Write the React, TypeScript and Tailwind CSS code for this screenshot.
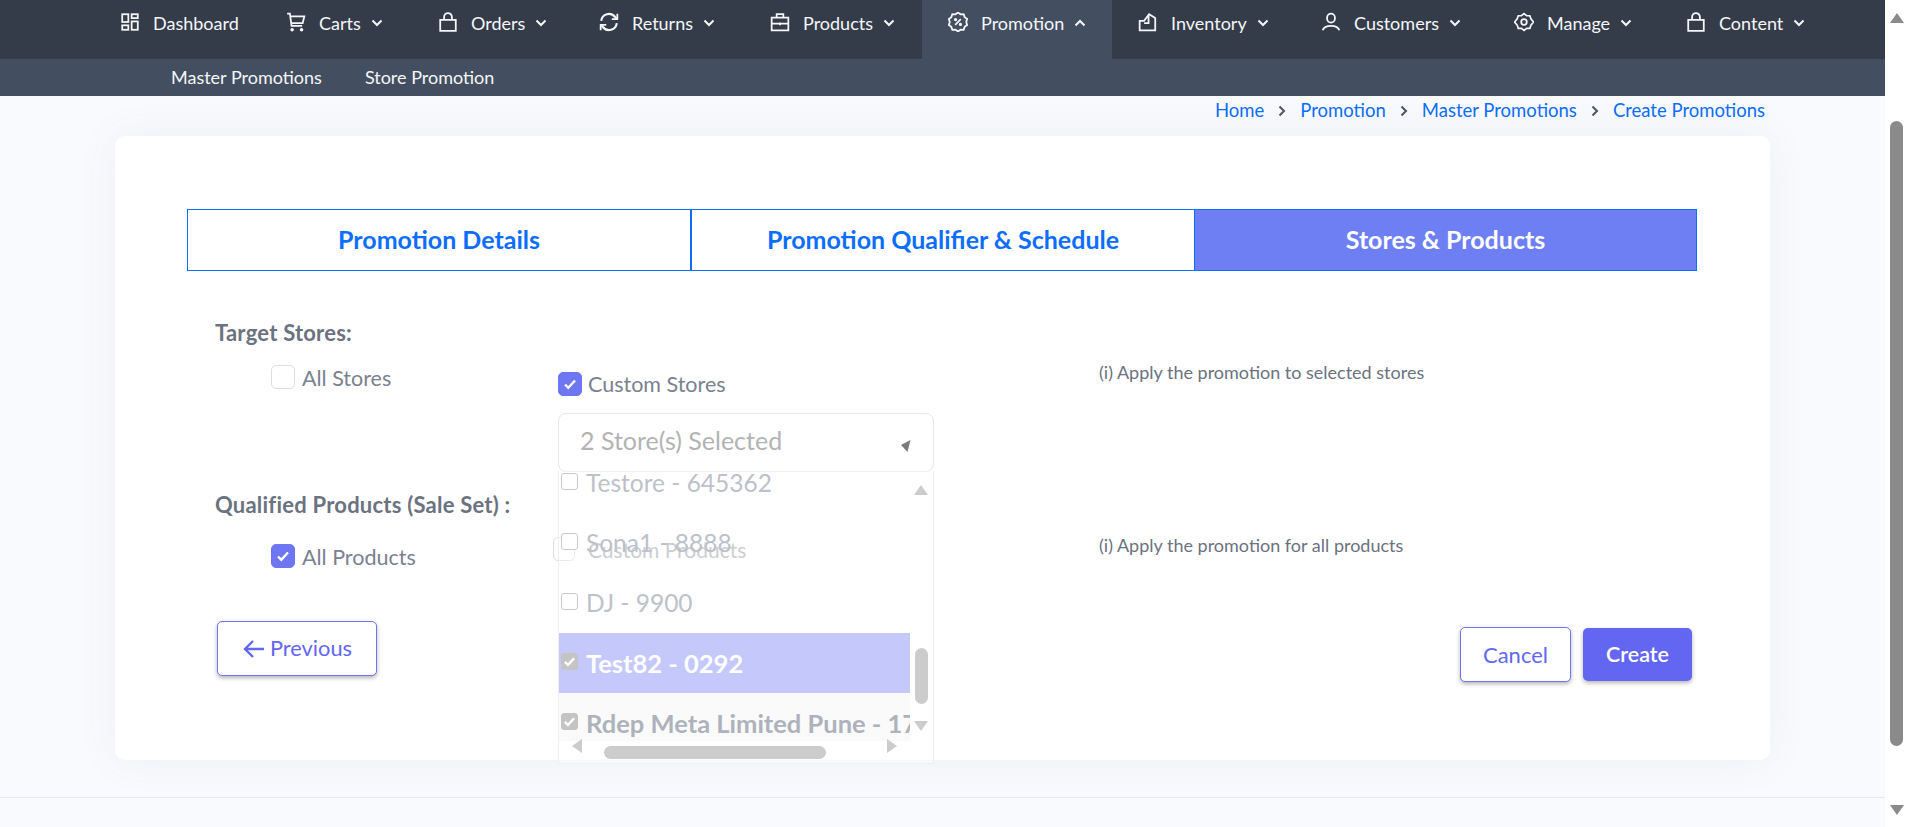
import React from "react";

const Svg = ({ children }: { children: React.ReactNode }) => (
  <svg
    xmlns="http://www.w3.org/2000/svg"
    width="20"
    height="20"
    viewBox="0 0 18 18"
    fill="none"
    stroke="currentColor"
    strokeWidth="1.6"
    className="shrink-0"
  >
    {children}
  </svg>
);

const icons: Record<string, React.ReactNode> = {
  dashboard: (
    <Svg>
      <rect x="2" y="2" width="5.5" height="7" />
      <rect x="10.5" y="2" width="5.5" height="3.5" />
      <rect x="2" y="12" width="5.5" height="4" />
      <rect x="10.5" y="8.5" width="5.5" height="7.5" />
    </Svg>
  ),
  cart: (
    <Svg>
      <path d="M1 1.5h2.5l1.5 11h9.5M4 4h12.5l-1.5 6H5" />
      <circle cx="5.5" cy="16" r="0.8" fill="currentColor" />
      <circle cx="14" cy="16" r="0.8" fill="currentColor" />
    </Svg>
  ),
  bag: (
    <Svg>
      <path d="M2 7h14v10H2zM5.5 7V4.500a3.500 3.500 0 0 1 7 0V7" />
    </Svg>
  ),
  returns: (
    <Svg>
      <path d="M2 8a7 7 0 0 1 12.500-3.500L16 6M16 10a7 7 0 0 1-12.500 3.500L2 12" strokeWidth="1.900" />
      <path d="M16.500 1.500V6.500H11.500M1.500 16.500V11.500H6.500" strokeWidth="1.600" />
    </Svg>
  ),
  products: (
    <Svg>
      <path d="M1.500 5h15v11.500h-15zM6 5V2h6v3M1.500 10.500h15M9 9.500v2.500" />
    </Svg>
  ),
  promotion: (
    <Svg>
      <path d="M9 1l2.300 1.600 2.800-.1.9 2.600 2.200 1.700L16.400 9.500l.8 2.700-2.200 1.700-.9 2.600-2.800-.1L9 18l-2.300-1.600-2.800.1-.9-2.600L.8 12.200l.8-2.700-.8-2.700L3 5.100l.9-2.600 2.800.1z" transform="translate(0 -.5)" />
      <path d="M6.500 11.500l5-5" />
      <circle cx="6.800" cy="6.800" r="0.7" />
      <circle cx="11.200" cy="11.200" r="0.7" />
    </Svg>
  ),
  inventory: (
    <Svg>
      <path d="M1.500 8H5.500L10 2l5.500 3.500V16.500H1.500zM9.500 3v7H5.500" />
    </Svg>
  ),
  customers: (
    <Svg>
      <rect x="5.500" y="1.500" width="7" height="8" rx="3.500" />
      <path d="M1.500 16.500c1-3 3.500-4 7.500-4s6.500 1 7.500 4" />
    </Svg>
  ),
  manage: (
    <Svg>
      <path d="M9 1l2.500 2h3l1 3L18 9l-2.500 3-1 3h-3L9 17l-2.500-2h-3l-1-3L0 9l2.500-3 1-3h3z" transform="translate(.5 .5) scale(.95)" />
      <circle cx="9" cy="9" r="2.500" />
    </Svg>
  ),
};

const Chevron = ({ up }: { up?: boolean }) => (
  <svg width="12" height="8" viewBox="0 0 12 8" fill="none" stroke="currentColor" strokeWidth="2" className="shrink-0">
    <path d={up ? "M1.500 6.500L6 2l4.500 4.500" : "M1.500 1.500L6 6l4.500-4.500"} />
  </svg>
);

const Crumb = () => (
  <svg width="8" height="12" viewBox="0 0 8 12" fill="none" stroke="#4b5563" strokeWidth="2" className="mt-[7px] shrink-0">
    <path d="M1.500 1.500L6 6l-4.500 4.500" />
  </svg>
);

const navItems = [
  { label: "Dashboard", icon: "dashboard", width: "w-[166px]", caret: false },
  { label: "Carts", icon: "cart", width: "w-[152px]", caret: true },
  { label: "Orders", icon: "bag", width: "w-[161px]", caret: true },
  { label: "Returns", icon: "returns", width: "w-[171px]", caret: true },
  { label: "Products", icon: "products", width: "w-[178px]", caret: true },
  { label: "Promotion", icon: "promotion", width: "w-[190px]", caret: true, active: true },
  { label: "Inventory", icon: "inventory", width: "w-[183px]", caret: true },
  { label: "Customers", icon: "customers", width: "w-[193px]", caret: true },
  { label: "Manage", icon: "manage", width: "w-[172px]", caret: true },
  { label: "Content", icon: "bag", width: "w-[190px]", caret: true },
];

const Check = ({ on, className }: { on?: boolean; className: string }) => (
  <span
    className={`flex shrink-0 items-center justify-center rounded-[5px] border ${
      on ? "border-[#6e76f2] bg-[#6e76f2]" : "border-[#dcdee3] bg-white"
    } ${className}`}
  >
    {on && (
      <svg width="14" height="12" viewBox="0 0 14 12" fill="none" stroke="#fff" strokeWidth="2.400">
        <path d="M2 6.500l3.300 3.300L12 2.500" />
      </svg>
    )}
  </span>
);

const Option = ({ text, state }: { text: string; state?: "active" | "picked" }) => (
  <div
    className={`flex h-[60px] shrink-0 items-start whitespace-nowrap pl-[2px] pt-[14px] leading-[32px] ${
      state === "active"
        ? "bg-[#c5c8fa] text-[25.500px] font-bold text-white"
        : state === "picked"
          ? "bg-[#fafafa] text-[25.500px] font-bold text-[#adb2bb]"
          : "text-[24.500px] text-[#bcc1ca]"
    }`}
  >
    <span
      className={`mr-[8px] mt-[6px] flex h-[17px] w-[17px] shrink-0 items-center justify-center rounded-[3px] border ${
        state ? "border-[#c4c4c4] bg-[#c4c4c4]" : "border-[#c9c9c9] bg-white"
      }`}
    >
      {state && (
        <svg width="13" height="11" viewBox="0 0 14 12" fill="none" stroke="#fff" strokeWidth="2.600">
          <path d="M2 6.500l3.300 3.300L12 2.500" />
        </svg>
      )}
    </span>
    {text}
  </div>
);

export default function App() {
  return (
    <div className="flex h-[827px] w-full overflow-hidden bg-[#f9fafd] font-[family-name:Lato,sans-serif] text-[18px]">
      <div className="flex min-w-0 flex-1 flex-col">
        {/* top nav */}
        <nav className="flex h-[59px] bg-[#343c4a] pl-[94px] text-[#f5f6f8]">
          {navItems.map((item) => (
            <div
              key={item.label}
              className={`flex items-start gap-[13px] pl-[26px] pt-[12px] ${item.width} ${
                item.active ? "bg-[#434f60]" : ""
              }`}
            >
              {icons[item.icon]}
              <span className="flex h-[24px] items-center gap-[10px] leading-[24px] -mt-[1px]">
                {item.label}
                {item.caret && <Chevron up={item.active} />}
              </span>
            </div>
          ))}
        </nav>
        <div className="flex h-[37px] items-center gap-[43px] bg-[#434f60] pl-[171px] text-[#f5f6f8]">
          <span>Master Promotions</span>
          <span>Store Promotion</span>
        </div>

        {/* breadcrumb */}
        <div className="flex h-[40px] items-start justify-end gap-[14px] pr-[120px] pt-[2px] text-[18.500px] leading-[24px] text-[#0d6efd]">
          <span>Home</span>
          <Crumb />
          <span>Promotion</span>
          <Crumb />
          <span>Master Promotions</span>
          <Crumb />
          <span>Create Promotions</span>
        </div>

        {/* card */}
        <div className="ml-[115px] h-[624px] w-[1655px] shrink-0 rounded-[10px] bg-white px-[72px] pt-[73px] shadow-[0_0_40px_rgba(90,100,140,0.07)]">
          <div className="flex h-[62px] w-[1510px] text-[25px] font-bold">
            <div className="flex w-[504px] items-center justify-center border border-[#0d6efd] text-[#0d6efd]">
              Promotion Details
            </div>
            <div className="flex w-[504px] items-center justify-center border border-[#0d6efd] text-[#0d6efd]">
              Promotion Qualifier &amp; Schedule
            </div>
            <div className="flex w-[502px] items-center justify-center border border-l-0 border-[#0d6efd] bg-[#6e7ff3] text-white">
              Stores &amp; Products
            </div>
          </div>

          <div className="ml-[28px] mt-[50px] h-[24px] text-[22px] font-bold leading-[24px] tracking-[0.01em] text-[#6b7280]">
            Target Stores:
          </div>

          {/* target stores row */}
          <div className="mt-[20px] flex h-[107px] pl-[84px] text-[#7a8190]">
            <div className="flex w-[287px] items-start gap-[7px]">
              <Check className="h-[24px] w-[24px]" />
              <span className="text-[21.500px] leading-[26px]">All Stores</span>
            </div>
            <div className="relative mt-[6px] w-[541px]">
              <div className="flex items-center gap-[6px]">
                <Check on className="h-[24px] w-[24px]" />
                <span className="text-[21.500px] leading-[26px]">Custom Stores</span>
              </div>
              <div className="mt-[16px] flex h-[59px] w-[376px] items-start justify-between rounded-[8px] border border-[#e5e7eb] bg-white pl-[21px] pr-[22px] pt-[10px] text-[25px] leading-[32px] text-[#b3b3b3]">
                2 Store(s) Selected
                <svg width="10" height="12" viewBox="0 0 10 12" className="mt-[16px]">
                  <path d="M9.500 0L0 5l6.500 7z" fill="#7a7a7a" />
                </svg>
              </div>
              {/* open dropdown list */}
              <div className="absolute left-0 top-[100px] z-10 h-[293px] w-[376px] overflow-hidden border-x border-b border-[#eeeff2] bg-white/40">
                <div className="-mt-[18px] flex h-[288px] w-[351px] flex-col overflow-hidden">
                  <Option text="Testore - 645362" />
                  <Option text="Sona1 - 8888" />
                  <Option text="DJ - 9900" />
                  <Option text="Test82 - 0292" state="active" />
                  <Option text="Rdep Meta Limited Pune - 1701" state="picked" />
                </div>
                {/* list scrollbars */}
                <svg width="14" height="10" viewBox="0 0 14 10" className="absolute left-[355px] top-[14px]">
                  <path d="M7 0l7 10H0z" fill="#ccc" />
                </svg>
                <div className="absolute left-[356px] top-[177px] h-[56px] w-[13px] rounded-full bg-[#cccccc]" />
                <svg width="14" height="10" viewBox="0 0 14 10" className="absolute left-[355px] top-[250px]">
                  <path d="M0 0h14L7 10z" fill="#ccc" />
                </svg>
                <svg width="10" height="14" viewBox="0 0 10 14" className="absolute left-[13px] top-[268px]">
                  <path d="M10 0v14L0 7z" fill="#ccc" />
                </svg>
                <div className="absolute left-[45px] top-[275px] h-[13px] w-[222px] rounded-full bg-[#cccccc]" />
                <svg width="10" height="14" viewBox="0 0 10 14" className="absolute left-[328px] top-[268px]">
                  <path d="M0 0v14l10-7z" fill="#ccc" />
                </svg>
              </div>
            </div>
            <span className="-mt-[4px] text-[18px] leading-[22px] text-[#6b7280]">(i) Apply the promotion to selected stores</span>
          </div>

          <div className="ml-[28px] mt-[21px] h-[24px] text-[22px] font-bold leading-[24px] tracking-[0.01em] text-[#6b7280]">
            Qualified Products (Sale Set) :
          </div>

          {/* qualified products row */}
          <div className="mt-[15px] flex h-[38px] pl-[84px] text-[#7a8190]">
            <div className="mt-[12px] flex w-[282px] items-start gap-[7px]">
              <Check on className="h-[24px] w-[24px]" />
              <span className="text-[21.500px] leading-[26px]">All Products</span>
            </div>
            <div className="mt-[5px] flex w-[546px] items-start gap-[13px] text-[#a9adb5]">
              <Check className="h-[24px] w-[22px]" />
              <span className="text-[21px] leading-[26px]">Custom Products</span>
            </div>
            <span className="mt-[2px] text-[18px] leading-[22px] text-[#6b7280]">(i) Apply the promotion for all products</span>
          </div>

          {/* actions */}
          <div className="ml-[30px] mt-[51px] flex w-[1475px] items-start">
            <button className="flex h-[55px] w-[160px] items-center justify-center gap-[4px] rounded-[5px] border border-[#6e76f2] bg-white text-[21.800px] text-[#6366f1] shadow-[0_2px_4px_rgba(0,0,0,0.3)]">
              <svg width="24" height="22" viewBox="0 0 24 22" fill="none" stroke="currentColor" strokeWidth="2.400">
                <path d="M22 11H3M11 3l-8 8 8 8" />
              </svg>
              Previous
            </button>
            <div className="ml-auto mt-[6px] flex items-start gap-[12px]">
              <button className="h-[55px] w-[111px] rounded-[5px] border border-[#6e76f2] bg-white text-[22px] text-[#6366f1] shadow-[0_2px_4px_rgba(0,0,0,0.3)]">
                Cancel
              </button>
              <button className="mt-[1px] h-[53px] w-[109px] rounded-[5px] bg-[#6366f1] text-[21.500px] font-semibold text-white shadow-[0_2px_4px_rgba(0,0,0,0.3)]">
                Create
              </button>
            </div>
          </div>
        </div>

        <div className="mt-[37px] flex-1 border-t border-[#e5e7ef]" />
      </div>

      {/* page scrollbar */}
      <div className="flex w-[23px] shrink-0 flex-col items-center bg-white pt-[13px]">
        <svg width="14" height="10" viewBox="0 0 14 10">
          <path d="M7 0l7 10H0z" fill="#8a8a8a" />
        </svg>
        <div className="mt-[98px] h-[625px] w-[13px] rounded-full bg-[#8a8a8a]" />
        <svg width="14" height="10" viewBox="0 0 14 10" className="mt-[59px]">
          <path d="M0 0h14L7 10z" fill="#8a8a8a" />
        </svg>
      </div>
    </div>
  );
}
